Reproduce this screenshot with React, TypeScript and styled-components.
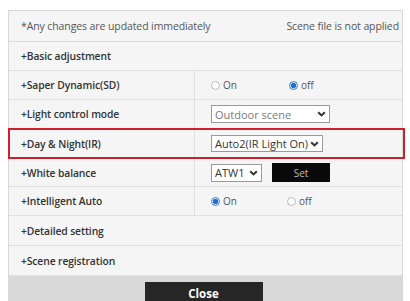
import React from "react";
import styled, { createGlobalStyle } from "styled-components";

const Global = createGlobalStyle`
  html, body { margin: 0; padding: 0; background: #fff; }
  body { font-family: "Open Sans", "Noto Sans", sans-serif; color: #333; }
`;

const Page = styled.div`
  width: 410px;
  height: 301px;
  padding: 10px 7px 0 8px;
  box-sizing: border-box;
  overflow: hidden;
`;

const Panel = styled.div`
  border: 1px solid #d8d8d8;
  border-bottom: none;
  background: #f5f5f5;
  display: flex;
  flex-direction: column;
`;

const Header = styled.div`
  height: 30px;
  display: flex;
  align-items: center;
  justify-content: space-between;
  padding: 0 3px 0 12px;
  font-size: 10.5px;
  color: #555;
  letter-spacing: -0.1px;
  border-bottom: 1px solid #dcdcdc;
`;

const Row = styled.div<{ $h: number }>`
  height: ${(p) => p.$h}px;
  display: grid;
  grid-template-columns: 186px 1fr;
  border-bottom: 1px solid #e0e0e0;
  position: relative;
`;

const Full = styled.div<{ $h: number }>`
  height: ${(p) => p.$h}px;
  display: flex;
  align-items: center;
  padding-left: 12px;
  font-size: 10.3px;
  font-weight: 600;
  color: #333;
  letter-spacing: -0.1px;
  border-bottom: 1px solid #e0e0e0;
`;

const Label = styled.div`
  display: flex;
  align-items: center;
  padding-left: 12px;
  font-size: 10.3px;
  font-weight: 600;
  color: #333;
  letter-spacing: -0.1px;
  border-right: 1px solid #e0e0e0;
`;

const Value = styled.div<{ $gap?: number }>`
  display: flex;
  align-items: center;
  padding-left: 16px;
  gap: ${(p) => p.$gap ?? 12}px;
  font-size: 10px;
  color: #444;
`;

const RadioItem = styled.label<{ $w: number }>`
  display: flex;
  align-items: center;
  gap: 3px;
  width: ${(p) => p.$w}px;
  font-size: 10px;
  color: #555;
`;

const Dot = styled.span<{ $on?: boolean }>`
  width: 9px;
  height: 9px;
  border-radius: 50%;
  box-sizing: border-box;
  border: 1px solid ${(p) => (p.$on ? "#3b82d6" : "#b8b8b8")};
  background: ${(p) => (p.$on ? "radial-gradient(circle, #1e6fd0 0 2.4px, #d7e8fa 2.9px)" : "#fff")};
`;

const Select = styled.div<{ $w: number; $h: number }>`
  width: ${(p) => p.$w}px;
  height: ${(p) => p.$h}px;
  box-sizing: border-box;
  border: 1px solid #9a9a9a;
  background: #fff;
  display: flex;
  align-items: center;
  padding: 0 3px 0 3px;
  font-size: 11px;
  color: #444;
  white-space: nowrap;
  overflow: hidden;
`;

const SelText = styled.span<{ $muted?: boolean }>`
  flex: 1;
  min-width: 0;
  overflow: hidden;
  color: ${(p) => (p.$muted ? "#7a7a7a" : "#333")};
`;

const SetBtn = styled.div`
  width: 58px;
  height: 19px;
  background: #0a0a0a;
  color: #bbb;
  font-size: 10px;
  display: flex;
  align-items: center;
  justify-content: center;
`;

const HighlightBox = styled.div`
  position: absolute;
  left: -1px;
  right: -3px;
  top: -1px;
  bottom: -1px;
  border: 2px solid #cf1f2c;
  pointer-events: none;
`;

const Footer = styled.div`
  height: 29px;
  background: #d9d9d9;
  display: flex;
  justify-content: center;
  align-items: flex-end;
`;

const CloseBtn = styled.div`
  width: 118px;
  height: 23px;
  margin-right: 4px;
  background: #262626;
  color: #fff;
  font-weight: 700;
  font-size: 11.5px;
  display: flex;
  align-items: center;
  justify-content: center;
`;

const Chevron = () => (
  <svg width="9" height="6" viewBox="0 0 9 6" style={{ flex: "none", marginLeft: 2 }}>
    <path d="M1.2 1.2 L4.5 4.4 L7.8 1.2" fill="none" stroke="#333" strokeWidth="2" />
  </svg>
);

export default function App() {
  return (
    <>
      <Global />
      <Page>
        <Panel>
          <Header>
            <span>*Any changes are updated immediately</span>
            <span>Scene file is not applied</span>
          </Header>
          <Full $h={28}>+Basic adjustment</Full>
          <Row $h={28}>
            <Label>+Saper Dynamic(SD)</Label>
            <Value>
              <RadioItem $w={66}><Dot />On</RadioItem>
              <RadioItem $w={40}><Dot $on />off</RadioItem>
            </Value>
          </Row>
          <Row $h={28}>
            <Label>+Light control mode</Label>
            <Value>
              <Select $w={119} $h={18}>
                <SelText $muted>Outdoor scene</SelText>
                <Chevron />
              </Select>
            </Value>
          </Row>
          <Row $h={29}>
            <Label>+Day &amp; Night(IR)</Label>
            <Value>
              <Select $w={112} $h={17}>
                <SelText>Auto2(IR Light On)</SelText>
                <Chevron />
              </Select>
            </Value>
            <HighlightBox />
          </Row>
          <Row $h={27}>
            <Label>+White balance</Label>
            <Value $gap={10}>
              <Select $w={51} $h={18}>
                <SelText>ATW1</SelText>
                <Chevron />
              </Select>
              <SetBtn>Set</SetBtn>
            </Value>
          </Row>
          <Row $h={28}>
            <Label>+Intelligent Auto</Label>
            <Value>
              <RadioItem $w={64}><Dot $on />On</RadioItem>
              <RadioItem $w={40}><Dot />off</RadioItem>
            </Value>
          </Row>
          <Full $h={29}>+Detailed setting</Full>
          <Full $h={29}>+Scene registration</Full>
          <Footer>
            <CloseBtn>Close</CloseBtn>
          </Footer>
        </Panel>
      </Page>
    </>
  );
}
